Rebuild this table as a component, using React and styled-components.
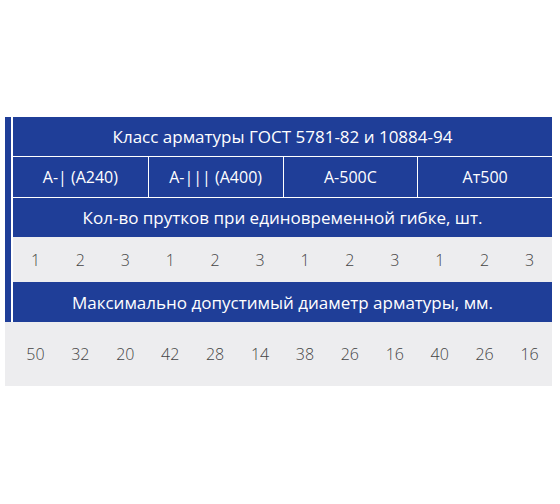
import styled, { createGlobalStyle } from "styled-components";

const GlobalStyle = createGlobalStyle`
  html, body {
    margin: 0;
    padding: 0;
    background: #fff;
  }
  body {
    font-family: "Open Sans", "Noto Sans", sans-serif;
  }
`;

const BLUE = "#1f3e98";
const GREY = "#ededef";

const Page = styled.div`
  width: 560px;
  height: 504px;
  padding: 117px 8px 0 5px;
  box-sizing: border-box;
`;

const Table = styled.div`
  display: flex;
  flex-direction: column;
  width: 547px;
`;

const Top = styled.div`
  display: flex;
`;

const Strip = styled.div`
  width: 6px;
  background: ${BLUE};
  border-right: 2px solid #fff;
`;

const Body = styled.div`
  flex: 1;
  display: flex;
  flex-direction: column;
`;

const HeadRow = styled.div`
  display: grid;
  grid-template-columns: repeat(${(p) => p.$cols || 1}, 1fr);
  background: ${BLUE};
  color: #fff;
  height: ${(p) => p.$h}px;
  border-bottom: ${(p) => (p.$line ? "1px solid #fff" : "none")};
  box-sizing: border-box;
`;

const HeadCell = styled.div`
  display: flex;
  align-items: center;
  justify-content: center;
  font-size: ${(p) => p.$size || 17}px;
  font-weight: 400;
  & + & {
    border-left: 1px solid #fff;
  }
`;

const DataRow = styled.div`
  display: grid;
  grid-template-columns: repeat(12, 1fr);
  background: ${GREY};
  color: #444;
  height: ${(p) => p.$h}px;
  padding-left: ${(p) => p.$pad || 0}px;
`;

const Num = styled.div`
  display: flex;
  align-items: center;
  justify-content: center;
  font-size: 16px;
  font-weight: 300;
`;

const classes = ["А-| (А240)", "А-||| (А400)", "А-500С", "Ат500"];
const counts = [1, 2, 3, 1, 2, 3, 1, 2, 3, 1, 2, 3];
const diameters = [50, 32, 20, 42, 28, 14, 38, 26, 16, 40, 26, 16];

export default function App() {
  return (
    <>
      <GlobalStyle />
      <Page>
        <Table>
          <Top>
            <Strip />
            <Body>
              <HeadRow $h={40} $line>
                <HeadCell>Класс арматуры ГОСТ 5781-82 и 10884-94</HeadCell>
              </HeadRow>
              <HeadRow $h={41} $cols={4} $line>
                {classes.map((c) => (
                  <HeadCell key={c} $size={16}>
                    {c}
                  </HeadCell>
                ))}
              </HeadRow>
              <HeadRow $h={39}>
                <HeadCell>Кол-во прутков при единовременной гибке, шт.</HeadCell>
              </HeadRow>
              <DataRow $h={45}>
                {counts.map((n, i) => (
                  <Num key={i}>{n}</Num>
                ))}
              </DataRow>
              <HeadRow $h={40}>
                <HeadCell>Максимально допустимый диаметр арматуры, мм.</HeadCell>
              </HeadRow>
            </Body>
          </Top>
          <DataRow $h={64} $pad={8}>
            {diameters.map((n, i) => (
              <Num key={i}>{n}</Num>
            ))}
          </DataRow>
        </Table>
      </Page>
    </>
  );
}
